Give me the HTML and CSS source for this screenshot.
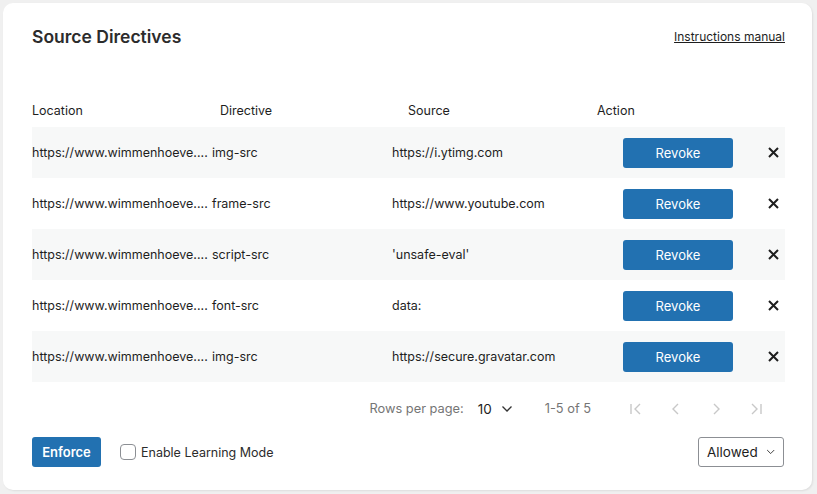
FILE: index.html
```html
<html>
<head>
<link rel="stylesheet" href="styles.css">
</head>
<body>
<div class="card">
  <div class="cardHead">
    <h2 class="title">Source Directives</h2>
    <a class="manual" href="#manual">Instructions manual</a>
  </div>

  <div class="table">
    <div class="headRow">
      <span>Location</span>
      <span>Directive</span>
      <span>Source</span>
      <span>Action</span>
    </div>
    <div class="row">
      <span class="loc">https://www.wimmenhoeve....</span>
      <span>img-src</span>
      <span>https://i.ytimg.com</span>
      <span class="act"><button class="btn revoke">Revoke</button></span>
      <span class="del"><svg width="11" height="11" viewBox="0 0 11 11"><path d="M1 1 L10 10 M10 1 L1 10" stroke="#1e1e1e" stroke-width="2"/></svg></span>
    </div>
    <div class="row">
      <span class="loc">https://www.wimmenhoeve....</span>
      <span>frame-src</span>
      <span>https://www.youtube.com</span>
      <span class="act"><button class="btn revoke">Revoke</button></span>
      <span class="del"><svg width="11" height="11" viewBox="0 0 11 11"><path d="M1 1 L10 10 M10 1 L1 10" stroke="#1e1e1e" stroke-width="2"/></svg></span>
    </div>
    <div class="row">
      <span class="loc">https://www.wimmenhoeve....</span>
      <span>script-src</span>
      <span>'unsafe-eval'</span>
      <span class="act"><button class="btn revoke">Revoke</button></span>
      <span class="del"><svg width="11" height="11" viewBox="0 0 11 11"><path d="M1 1 L10 10 M10 1 L1 10" stroke="#1e1e1e" stroke-width="2"/></svg></span>
    </div>
    <div class="row">
      <span class="loc">https://www.wimmenhoeve....</span>
      <span>font-src</span>
      <span>data:</span>
      <span class="act"><button class="btn revoke">Revoke</button></span>
      <span class="del"><svg width="11" height="11" viewBox="0 0 11 11"><path d="M1 1 L10 10 M10 1 L1 10" stroke="#1e1e1e" stroke-width="2"/></svg></span>
    </div>
    <div class="row">
      <span class="loc">https://www.wimmenhoeve....</span>
      <span>img-src</span>
      <span>https://secure.gravatar.com</span>
      <span class="act"><button class="btn revoke">Revoke</button></span>
      <span class="del"><svg width="11" height="11" viewBox="0 0 11 11"><path d="M1 1 L10 10 M10 1 L1 10" stroke="#1e1e1e" stroke-width="2"/></svg></span>
    </div>
  </div>

  <div class="pager">
    <span class="muted">Rows per page:</span>
    <span class="perPage">10
      <svg width="12" height="8" viewBox="0 0 12 8"><path d="M1.5 1.5 L6 6 L10.5 1.5" fill="none" stroke="#333" stroke-width="1.3"/></svg>
    </span>
    <span class="muted range">1-5 of 5</span>
    <span class="pgIcons">
      <svg width="14" height="14" viewBox="0 0 14 14"><path d="M2 2 V12 M11 2 L6 7 L11 12" fill="none" stroke="#c8c8c8" stroke-width="1.4"/></svg>
      <svg width="14" height="14" viewBox="0 0 14 14"><path d="M9 2 L4 7 L9 12" fill="none" stroke="#c8c8c8" stroke-width="1.4"/></svg>
      <svg width="14" height="14" viewBox="0 0 14 14"><path d="M5 2 L10 7 L5 12" fill="none" stroke="#c8c8c8" stroke-width="1.4"/></svg>
      <svg width="14" height="14" viewBox="0 0 14 14"><path d="M3 2 L8 7 L3 12 M12 2 V12" fill="none" stroke="#c8c8c8" stroke-width="1.4"/></svg>
    </span>
  </div>

  <div class="footer">
    <button class="btn enforce">Enforce</button>
    <label class="learn"><span class="box"></span>Enable Learning Mode</label>
    <span class="select">Allowed
      <svg width="12" height="8" viewBox="0 0 12 8"><path d="M1.5 1.5 L6 6 L10.5 1.5" fill="none" stroke="#333" stroke-width="1.2"/></svg>
    </span>
  </div>
</div>
</body>
</html>
```

FILE: styles.css
```css
body {
  margin: 0;
  background-color: #f0f0f0;
  font-family: Inter, "Liberation Sans", sans-serif;
  color: #1e1e1e;
}

.card {
  margin: 3px 5px 4px 3px;
  height: 487px;
  box-sizing: border-box;
  background-color: #fff;
  border-radius: 10px;
  box-shadow: 1px 1px 2px rgba(0,0,0,0.08);
  padding: 23px 27px 0 29px;
}

.cardHead {
  display: flex;
  justify-content: space-between;
  align-items: center;
  height: 20px;
}

.title {
  margin: 0;
  font-size: 17.5px;
  font-weight: 600;
  color: #2c2c2c;
}

.manual {
  font-size: 12px;
  color: #1e1e1e;
  text-decoration: underline;
}

.table {
  margin-top: 47px;
}

.headRow {
  display: grid;
  grid-template-columns: 188px 188px 189px 1fr;
  height: 34px;
  align-items: center;
  font-size: 12.5px;
}

.row {
  display: grid;
  grid-template-columns: 180px 180px 231px 110px 1fr;
  height: 51px;
  align-items: center;
  font-size: 12.5px;
}

.row:nth-child(even) {
  background-color: #f7f8f8;
}

.loc {
  white-space: nowrap;
}

.act {
  display: flex;
}

.btn {
  border: none;
  border-radius: 3px;
  background-color: #2271b1;
  color: #fff;
  font-family: inherit;
  font-size: 13px;
  height: 30px;
  padding: 0;
  cursor: pointer;
}

.revoke {
  width: 110px;
}

.del {
  display: flex;
  justify-content: flex-end;
  padding-right: 6px;
}

.pager {
  display: flex;
  align-items: center;
  justify-content: flex-end;
  height: 53px;
  font-size: 12.8px;
}

.muted {
  color: #757575;
}

.perPage {
  display: flex;
  align-items: center;
  gap: 9px;
  margin-left: 14px;
  font-size: 13.5px;
  color: #1e1e1e;
}

.range {
  margin-left: 32px;
}

.pgIcons {
  display: flex;
  gap: 26px;
  margin-left: 38px;
  margin-right: 22px;
}

.footer {
  display: flex;
  align-items: center;
  margin-top: 1px;
  height: 32px;
}

.enforce {
  width: 69px;
  font-weight: 600;
}

.learn {
  display: flex;
  align-items: center;
  margin-left: 19px;
  font-size: 12.5px;
  color: #2c2c2c;
}

.box {
  width: 14px;
  height: 14px;
  border: 1px solid #8c8f94;
  border-radius: 4px;
  margin-right: 5px;
}

.select {
  margin-left: auto;
  margin-right: 1px;
  display: flex;
  align-items: center;
  gap: 8px;
  box-sizing: border-box;
  height: 30px;
  width: 86px;
  padding: 0 8px;
  border: 1px solid #8c8f94;
  border-radius: 3px;
  font-size: 13.5px;
}
```
